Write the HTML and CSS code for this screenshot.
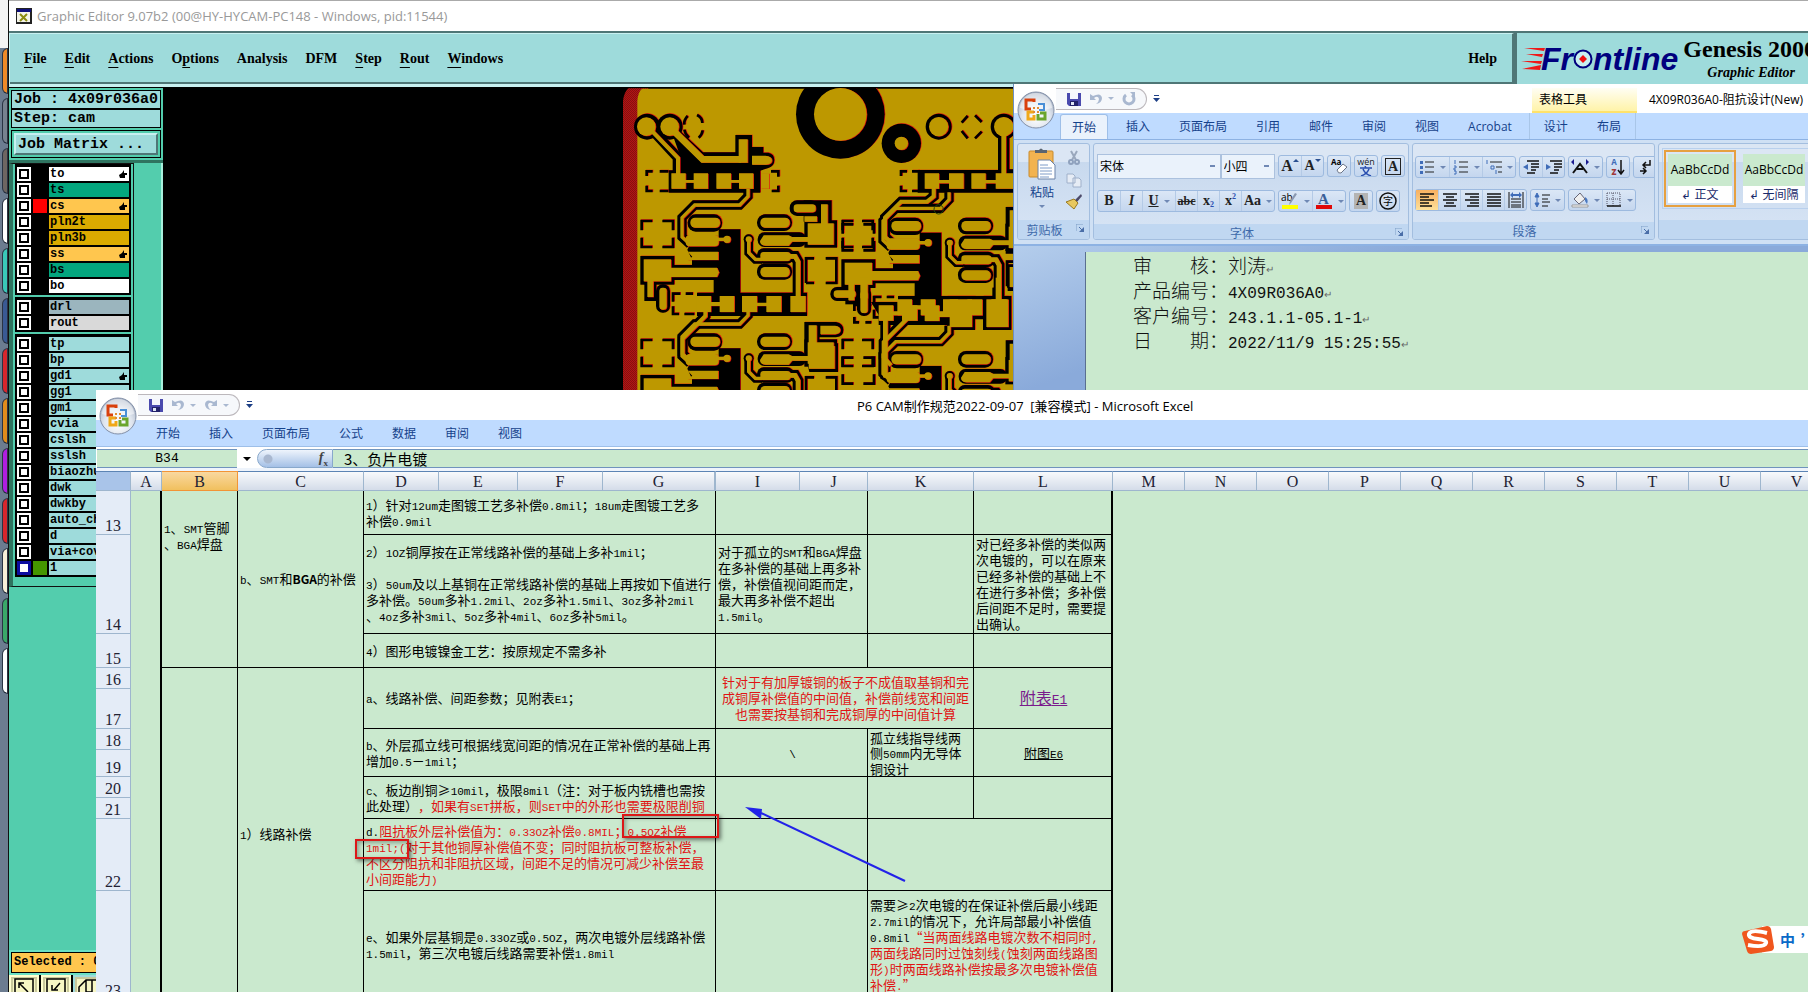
FILE: index.html
```html
<!DOCTYPE html>
<html lang="zh-CN">
<head>
    <meta charset="UTF-8">
    <meta name="viewport" content="width=device-width, initial-scale=1.0">
    <title>Graphic Editor 9.07b2</title>
    <link rel="stylesheet" href="styles.css">
</head>
<body>
<!-- shared icons -->
<svg class="defs" width="0" height="0">
    <defs>
        <radialGradient id="orbFill" cx="50%" cy="70%" r="65%">
            <stop offset="0" stop-color="#ffffff"/>
            <stop offset="0.6" stop-color="#dfe5ee"/>
            <stop offset="1" stop-color="#a9b4c6"/>
        </radialGradient>
        <symbol id="orb" viewBox="0 0 38 38">
            <circle cx="19" cy="19" r="18" fill="url(#orbFill)" stroke="#8390a8"/>
            <path d="M3 17a16 15 0 0 1 32 0q-16 5-32 0z" fill="#fff" opacity="0.5"/>
            <g fill="none" stroke-width="3">
                <path d="M17 11V9H9v9h5" stroke="#d9400c"/>
                <path d="M21 13h6v6h-5" stroke="#4a8fd6" stroke-width="2"/>
                <path d="M17 21h-6v7h6v-4" stroke="#f0a818"/>
                <path d="M21 23v5h7v-6h-5" stroke="#6aa52c"/>
            </g>
            <path d="M16 16h2v2h-2zM20 16h2v2h-2zM16 20h2v2h-2zM20 20h2v2h-2z" fill="#e08a30"/>
        </symbol>
        <symbol id="save" viewBox="0 0 14 14">
            <path d="M0 1h14v13H2l-2-2z" fill="#4a4aae"/>
            <path d="M3 1h8v6H3z" fill="#f4f6fc"/>
            <path d="M3 9h8v5H3z" fill="#22226a"/>
            <path d="M4 10h3v3H4z" fill="#dfe6f4"/>
        </symbol>
        <symbol id="undo" viewBox="0 0 14 14">
            <path d="M1 2v6h6l-2-2q4-3 5 1 0 3-3 5 6-1 6-6-1-6-9-2z" fill="#a9b8d0"/>
        </symbol>
        <symbol id="redo" viewBox="0 0 14 14">
            <path d="M13 2v6H7l2-2q-4-3-5 1 0 3 3 5-6-1-6-6 1-6 9-2z" fill="#a9b8d0"/>
        </symbol>
        <symbol id="repeat" viewBox="0 0 14 14">
            <path d="M4 3a5 5 0 1 0 6 0" fill="none" stroke="#a9b8d0" stroke-width="3"/>
            <path d="M8 0h5v5z" fill="#a9b8d0"/>
        </symbol>
        <symbol id="more" viewBox="0 0 7 8">
            <path d="M1 0h5v1H1zM0 3h7L3.500 7z" fill="#1d3f86"/>
        </symbol>
        <symbol id="launch" viewBox="0 0 8 8">
            <path d="M0 7V0h7" fill="none" stroke="#7f9fc8"/>
            <path d="M8 3v5H3z" fill="#4a6ea8"/>
            <path d="M3 3l3 3" stroke="#4a6ea8"/>
        </symbol>
        <symbol id="hand" viewBox="0 0 8 9">
            <path d="M0 5l3-2 2-3v3h3v2H6v3H1z" fill="#000"/>
        </symbol>
    </defs>
</svg>

<aside class="dock">
    <i class="tile tile-orange"></i><i class="tile"></i><i class="tile tile-brown"></i><i class="tile tile-white"></i>
    <i class="tile tile-teal"></i><i class="tile tile-navy"></i><i class="tile tile-red"></i><i class="tile tile-amber"></i>
    <i class="tile tile-purple"></i><i class="tile tile-red"></i><i class="tile tile-yellow"></i><i class="tile tile-green"></i>
    <i class="tile tile-white"></i>
</aside>

<!-- Genesis graphic editor -->
<section class="window genesis">
    <header class="gen-title">
        <svg width="16" height="16" viewBox="0 0 16 16">
            <path d="M0 0h16v16H0z" fill="#222"/><path d="M1 1h14v3H1z" fill="#10107a"/><path d="M1 4h13v10H1z" fill="#f4f4e8"/>
            <path d="M4 6l7 7M11 6l-7 7" stroke="#8c8c10" stroke-width="2"/>
        </svg>
        <span>Graphic Editor 9.07b2 (00@HY-HYCAM-PC148 - Windows, pid:11544)</span>
    </header>
    <div class="gen-head">
        <nav class="gen-menu">
            <button><u>F</u>ile</button>
            <button><u>E</u>dit</button>
            <button><u>A</u>ctions</button>
            <button>O<u>p</u>tions</button>
            <button>Analysis</button>
            <button>DFM</button>
            <button><u>S</u>tep</button>
            <button><u>R</u>out</button>
            <button><u>W</u>indows</button>
            <button class="help">Help</button>
        </nav>
        <div class="brand">
            <svg class="speed" width="24" height="24" viewBox="0 0 24 24">
                <path d="M3 1h21l-1 3zM5 7h17l-1 3zM0 14h21l-1 3zM1 22l19-4-1 5z" fill="#f01818"/>
            </svg>
            <span class="frontline">Fr<svg width="20" height="20" viewBox="0 0 20 20"><circle cx="10" cy="10" r="8.500" fill="#c8f0f0" stroke="#00007e" stroke-width="2"/><path d="M10 6l4 4-4 4-4-4z" fill="#f01010"/></svg>ntline</span>
            <div class="product">
                <b>Genesis 2000</b>
                <i>Graphic Editor</i>
            </div>
        </div>
    </div>
    <div class="gen-body">
        <div class="gen-side">
            <div class="job">
                <div class="field">Job : 4x09r036a0</div>
                <div class="field">Step: cam</div>
                <div class="matrix"><button>Job Matrix ...</button></div>
            </div>
            <div class="layers">
                <div class="layer-frame">
                    <ul class="group">
                        <li><input type="checkbox" id="l1"><i></i><label for="l1" class="white">to<svg width="8" height="9"><use href="#hand"/></svg></label></li>
                        <li><input type="checkbox" id="l2"><i></i><label for="l2" class="green">ts</label></li>
                        <li><input type="checkbox" id="l3"><i class="on-red"></i><label for="l3" class="orange">cs<svg width="8" height="9"><use href="#hand"/></svg></label></li>
                        <li><input type="checkbox" id="l4"><i></i><label for="l4" class="gold">pln2t</label></li>
                        <li><input type="checkbox" id="l5"><i></i><label for="l5" class="gold">pln3b</label></li>
                        <li><input type="checkbox" id="l6"><i></i><label for="l6" class="orange">ss<svg width="8" height="9"><use href="#hand"/></svg></label></li>
                        <li><input type="checkbox" id="l7"><i></i><label for="l7" class="green">bs</label></li>
                        <li><input type="checkbox" id="l8"><i></i><label for="l8" class="white">bo</label></li>
                    </ul>
                    <ul class="group">
                        <li><input type="checkbox" id="l9"><i></i><label for="l9" class="steel">drl</label></li>
                        <li><input type="checkbox" id="l10"><i></i><label for="l10" class="silver">rout</label></li>
                    </ul>
                    <ul class="group">
                        <li><input type="checkbox" id="l11"><i></i><label for="l11">tp</label></li>
                        <li><input type="checkbox" id="l12"><i></i><label for="l12">bp</label></li>
                        <li><input type="checkbox" id="l13"><i></i><label for="l13">gd1<svg width="8" height="9"><use href="#hand"/></svg></label></li>
                        <li><input type="checkbox" id="l14"><i></i><label for="l14">gg1</label></li>
                        <li><input type="checkbox" id="l15"><i></i><label for="l15">gm1</label></li>
                        <li><input type="checkbox" id="l16"><i></i><label for="l16">cvia</label></li>
                        <li><input type="checkbox" id="l17"><i></i><label for="l17">cslsh</label></li>
                        <li><input type="checkbox" id="l18"><i></i><label for="l18">sslsh</label></li>
                        <li><input type="checkbox" id="l19"><i></i><label for="l19">biaozhu</label></li>
                        <li><input type="checkbox" id="l20"><i></i><label for="l20">dwk</label></li>
                        <li><input type="checkbox" id="l21"><i></i><label for="l21">dwkby</label></li>
                        <li><input type="checkbox" id="l22"><i></i><label for="l22">auto_ch</label></li>
                        <li><input type="checkbox" id="l23"><i></i><label for="l23">d</label></li>
                        <li><input type="checkbox" id="l24"><i></i><label for="l24">via+cov</label></li>
                        <li><input type="checkbox" id="l25" class="work"><i class="on-green"></i><label for="l25">1</label></li>
                    </ul>
                </div>
                <div class="layer-scroll"></div>
            </div>
            <div class="selected">Selected : 0</div>
            <div class="tools">
                <button aria-label="Select"><svg width="20" height="20" viewBox="0 0 20 20"><path d="M1 20V1h18v19M5 5l9 9M5 10V5h5" fill="none" stroke="#000" stroke-width="1.500"/></svg></button>
                <button aria-label="Pick"><svg width="20" height="20" viewBox="0 0 20 20"><path d="M1 20V1h18v19M14 5l-6 7M6 7v5h6" fill="none" stroke="#000" stroke-width="1.500"/></svg></button>
                <button class="active" aria-label="Polygon"><svg width="20" height="20" viewBox="0 0 20 20"><path d="M1 20V9l7-7h11v18M8 2v12h6V2" fill="none" stroke="#000" stroke-width="1.500"/></svg></button>
            </div>
        </div>
        <div class="canvas">
            <svg class="pcb" width="390" height="303" viewBox="68 81 1170 909">
                <defs>
                    <pattern id="hatch" width="6" height="6" patternUnits="userSpaceOnUse">
                        <path d="M0 0h3v3H0zM3 3h3v3H3z" fill="#e01c1c"/>
                    </pattern>
                    <!-- copper clearances of one amplifier cell -->
                    <g id="cellBlack" fill="currentColor" stroke="currentColor" stroke-width="0" stroke-linecap="butt">
                        <path d="M355 505h65v190h200v70H290v-70h50v-38H215v-9h60v-52l-14-30 10-20 84-8z"/>
                        <rect x="262" y="460" width="103" height="52" rx="24"/>
                        <rect x="470" y="460" width="105" height="50" rx="24"/>
                        <rect x="472" y="514" width="145" height="44" rx="20"/>
                        <rect x="470" y="562" width="110" height="46" rx="20"/>
                        <rect x="470" y="608" width="105" height="48" rx="22"/>
                        <rect x="207" y="612" width="150" height="44"/>
                        <rect x="612" y="478" width="98" height="82"/>
                        <rect x="120" y="585" width="102" height="86"/>
                        <path fill="none" stroke-width="28" d="M443 384v22l-25 26H283l-38 38v58l24 22"/>
                        <path fill="none" stroke-width="26" d="M445 535v40l20 20h20"/>
                        <circle cx="445" cy="535" r="15"/>
                        <path fill="none" stroke-width="32" d="M560 586h24l9 16v96"/>
                        <path fill="none" stroke-width="30" d="M315 755v10l-68 68v46l22 24"/>
                        <path fill="none" stroke-width="36" d="M150 660v60"/>
                        <rect x="167" y="670" width="42" height="85" rx="20"/>
                        <path fill="none" stroke-width="8" d="M124 508v-28h32M186 480h32v28M218 530v28h-32M156 558h-32v-28"/>
                        <path fill="none" stroke-width="8" d="M727 508v-28h32M785 480h32v28M817 530v28h-32M759 558h-32v-28"/>
                        <path fill="none" stroke-width="8" d="M617 666v-74h24M676 592h32v74h-32M641 666h-24"/>
                        <path fill="none" stroke-width="8" d="M218 722v-24h22M256 698h22M218 736v23h18M252 759h30"/>
                    </g>
                    <g id="cellGold" fill="currentColor" stroke="currentColor" stroke-width="0">
                        <rect x="270" y="470" width="89" height="30" rx="14"/>
                        <rect x="256" y="522" width="99" height="34" rx="12"/>
                        <path d="M345 530h30v10h-30z"/><circle cx="380" cy="535" r="11"/>
                        <path d="M262 572h92v25h-92l14-10z"/>
                        <path d="M200 620h150l6 14-6 14H200z"/>
                        <rect x="480" y="470" width="88" height="30" rx="14"/>
                        <path d="M490 523h75l10 5h50v14h-50l-10 12h-70q-16-1-16-14z"/>
                        <rect x="480" y="573" width="90" height="27" rx="10"/>
                        <rect x="480" y="618" width="88" height="30" rx="14"/>
                        <rect x="622" y="487" width="78" height="64"/>
                        <rect x="130" y="595" width="82" height="66"/>
                        <path fill="none" stroke-width="10" d="M443 384v22l-25 26H283l-38 38v58l24 22"/>
                        <path fill="none" stroke-width="10" d="M445 535v40l20 20h20"/>
                        <circle cx="445" cy="535" r="9"/>
                        <path fill="none" stroke-width="14" d="M560 586h24l9 16v106"/>
                        <path fill="none" stroke-width="12" d="M315 745v20l-68 68v46l22 24"/>
                        <path fill="none" stroke-width="18" d="M150 655v53"/>
                        <rect x="177" y="680" width="22" height="66" rx="10"/>
                        <path d="M288 705h44v18h26v-18h44v48h-44v-18h-26v18h-44zM425 705h45v20h28v-20h45v48h-45v-18h-28v18h-45zM570 705h46v48h-46z"/>
                    </g>
                    <g id="topBlack" fill="currentColor" stroke="currentColor" stroke-width="0">
                        <circle cx="720" cy="160" r="133"/><circle cx="903" cy="247" r="59"/>
                        <circle cx="140" cy="197" r="39"/><circle cx="208" cy="197" r="39"/>
                        <path d="M220 230l22-18 66 62h97v-52h50v36h34v17h15q18 4 18 22t-18 24l-34 11H242v-40z"/>
                        <path d="M205 328h275v67H205z"/>
                        <path d="M160 212l72 78v50" fill="none" stroke-width="30"/>
                        <circle cx="1015" cy="197" r="39"/><circle cx="1210" cy="197" r="39"/>
                        <path d="M1193 225h34v100h12v70H952v-68h241z"/>
                        <path fill="none" stroke-width="30" d="M1000 384v22l-20 16h-78l-48 48v58l24 22"/>
                        <path fill="none" stroke-width="8" d="M262 165q-12 12-10 26M290 162q16 8 16 24M252 206q2 14 14 24M307 208q-2 14-12 22"/>
                        <path fill="none" stroke-width="8" d="M1084 185l18-20M1124 163l20 20M1084 210l18 22M1124 232l20-20"/>
                        <path fill="none" stroke-width="8" d="M139 345v-14h18M178 331h26M139 374v16h18M178 390h26M512 331h22v16M534 374v16h-20M902 345v-14h18M935 331h22M902 374v16h18M935 390h22"/>
                        <rect x="568" y="418" width="85" height="47" rx="22"/>
                        <path d="M610 418h84v64h-84z"/>
                    </g>
                    <g id="topGold" fill="currentColor" stroke="currentColor" stroke-width="0">
                        <circle cx="720" cy="160" r="79"/><circle cx="903" cy="247" r="20"/>
                        <circle cx="138" cy="197" r="28"/><circle cx="208" cy="197" r="28"/>
                        <path d="M215 205l92 90h115" fill="none" stroke-width="20"/>
                        <path d="M415 235h27v70h-27zM455 284h40q20 2 20 14t-18 13h-42z"/>
                        <path d="M150 205l83 86v50" fill="none" stroke-width="12"/>
                        <path d="M213 337h43v20h24v-20h43v46h-43v-18h-24v18h-43zM348 337h44v20h24v-20h43v46h-43v-18h-24v18h-44zM482 337h24v46h-24z"/>
                        <circle cx="1015" cy="197" r="29"/><circle cx="1210" cy="197" r="29"/>
                        <path d="M1210 215v130" fill="none" stroke-width="14"/>
                        <path d="M973 337h43v20h30v-20h44v46h-44v-16h-30v16h-43zM1113 337h43v20h30v-20h53v46h-53v-16h-30v16h-43z"/>
                        <path fill="none" stroke-width="12" d="M1000 380v26l-20 16h-78l-48 48v58l24 22"/>
                        <rect x="580" y="430" width="66" height="24" rx="10"/>
                        <path d="M662 430h20v60h-20zM612 466h38v16h-38z"/>
                    </g>
                    <g id="lowBlack" fill="currentColor" stroke="currentColor" stroke-width="0">
                        <path d="M812 723h228v-18h84v102h-84v-15H835v-30z"/>
                        <rect x="1148" y="705" width="85" height="102"/>
                        <rect x="690" y="678" width="88" height="42" rx="20"/>
                        <path d="M765 660h45v65h-30l-30-8z"/>
                        <path fill="none" stroke-width="30" d="M855 780v163l24 10"/>
                        <path fill="none" stroke-width="8" d="M762 750v-18h14M795 732h18M762 768v16h14M795 784h18"/>
                        <path d="M612 783h95q22 4 22 24t-22 22h-50v18h56v86h-86l-15-60z"/>
                        <path d="M1176 680h34v40h-34z"/>
                        <path d="M1216 438h22v140h-22zM1222 610h16v80h-16zM1216 838h22v100h-22z"/>
                    </g>
                    <g id="lowGold" fill="currentColor" stroke="currentColor" stroke-width="0">
                        <path d="M835 733h44v18h26v-18h46v46h-46v-16h-26v16h-44zM973 733h44v18h31v-36h67v83h-67v-30h-31v12h-44z"/>
                        <path d="M1158 715h66v83h-66z"/>
                        <rect x="700" y="688" width="66" height="22" rx="10"/>
                        <path d="M780 650h22v62h-22z"/>
                        <path fill="none" stroke-width="14" d="M855 775v168l30 8"/>
                        <path d="M625 793h24v62h54v68h-78zM660 794h44q16 2 16 13t-16 13h-44z"/>
                        <path d="M1186 650h14v70h-14z"/>
                        <path d="M1228 448h10v70h-10zM1228 618h10v60h-10zM1228 848h10v60h-10z"/>
                    </g>
                </defs>
                <path d="M68 81h1170v909H68z" fill="#000"/>
                <path d="M68 990V120q4-28 16-38h60v908z" fill="#5a0808"/>
                <path d="M68 990V120q4-28 16-38h60v908z" fill="url(#hatch)"/>
                <path d="M111 990V120q2-28 14-37h1113v907z" fill="#bd9800"/>
                <!-- red copies sit just beyond the black ones -->
                <g class="red">
                    <g transform="translate(2 -1)"><use href="#cellBlack"/><use href="#cellBlack" y="357"/><use href="#cellBlack" x="603" y="10"/><use href="#cellBlack" x="603" y="410"/><use href="#topBlack"/><use href="#lowBlack"/></g>
                </g>
                <g class="black"><use href="#cellBlack"/><use href="#cellBlack" y="357"/><use href="#cellBlack" x="603" y="10"/><use href="#cellBlack" x="603" y="410"/><use href="#topBlack"/><use href="#lowBlack"/></g>
                <g class="red"><g transform="translate(2 1)"><use href="#cellGold"/><use href="#cellGold" y="357"/><use href="#cellGold" x="603" y="10"/><use href="#cellGold" x="603" y="410"/><use href="#topGold"/><use href="#lowGold"/></g></g>
                <g class="copper"><use href="#cellGold"/><use href="#cellGold" y="357"/><use href="#cellGold" x="603" y="10"/><use href="#cellGold" x="603" y="410"/><use href="#topGold"/><use href="#lowGold"/></g>
                <circle cx="1015" cy="445" r="14" fill="none" stroke="#22400a" stroke-width="3"/>
            </svg>
        </div>
    </div>
</section>

<!-- Word -->
<section class="window word">
    <header class="titlebar">
        <svg class="orb" width="38" height="38"><use href="#orb"/></svg>
        <div class="qat">
            <button aria-label="保存"><svg width="14" height="14"><use href="#save"/></svg></button>
            <button aria-label="撤消" class="split"><svg width="14" height="14"><use href="#undo"/></svg></button>
            <button aria-label="重复"><svg width="14" height="14"><use href="#repeat"/></svg></button>
        </div>
        <svg class="qat-more" width="7" height="8"><use href="#more"/></svg>
        <div class="context-title">表格工具</div>
        <h1>4X09R036A0-阻抗设计(New)</h1>
    </header>
    <nav class="tabs">
        <button class="current">开始</button><button>插入</button><button>页面布局</button><button>引用</button><button>邮件</button><button>审阅</button><button>视图</button><button>Acrobat</button><span class="context-tabs"><button>设计</button><button>布局</button></span>
    </nav>
    <div class="ribbon">
        <div class="rgroup clipboard">
            <div class="rbody">
                <button class="paste">
                    <svg width="28" height="32" viewBox="0 0 28 32"><rect x="1" y="3" width="24" height="26" rx="1" fill="#f2b350" stroke="#c98a2a"/><path d="M7 5h12V2h-4q-2-3-4 0H7z" fill="#5a6470"/><path d="M10 12h12l5 5v14H10z" fill="#fff" stroke="#6a82a8"/><path d="M12 17h8M12 20h12M12 23h12M12 26h12M12 29h9" stroke="#7f9cc8"/></svg>
                    <span>粘贴</span>
                    <i class="caret"></i>
                </button>
                <div class="stack">
                    <button aria-label="剪切"><svg width="16" height="16" viewBox="0 0 16 16"><path d="M5 1l5 9M11 1L6 10" stroke="#9aa8bd" stroke-width="2"/><circle cx="5" cy="12" r="2" fill="none" stroke="#8fa1bd" stroke-width="2"/><circle cx="11" cy="12" r="2" fill="none" stroke="#8fa1bd" stroke-width="2"/></svg></button>
                    <button aria-label="复制"><svg width="16" height="16" viewBox="0 0 16 16"><path d="M1 2h6l2 2v7H1zM7 6h6l2 2v7H7z" fill="#e6ecf5" stroke="#9fb0ca"/></svg></button>
                    <button aria-label="格式刷"><svg width="16" height="16" viewBox="0 0 16 16"><path d="M15 0l-6 6 2 2 5-6z" fill="#4c4a6a"/><path d="M8 5l4 4-4 6-8-7z" fill="#e8c860" stroke="#9a7a20"/></svg></button>
                </div>
            </div>
            <footer>剪贴板<svg width="8" height="8"><use href="#launch"/></svg></footer>
        </div>
        <div class="rgroup font">
            <div class="rbody">
                <div class="rrow">
                    <select class="combo face" aria-label="字体"><option>宋体</option></select><select class="combo size" aria-label="字号"><option>小四</option></select>
                    <div class="bgroup">
                        <button class="serif big grow">A<svg width="6" height="3" viewBox="0 0 6 3"><path d="M0 3l3-3 3 3z" fill="#2a4f90"/></svg></button>
                        <button class="serif grow">A<svg width="6" height="3" viewBox="0 0 6 3"><path d="M0 0h6L3 3z" fill="#2a4f90"/></svg></button>
                    </div>
                    <div class="bgroup"><button aria-label="清除格式"><svg width="18" height="18" viewBox="0 0 18 18"><text x="1" y="8" font-size="8" font-weight="bold">Aa</text><path d="M7 13l6-6 4 3-6 6q-3 1-4-3z" fill="#fff" stroke="#6a7488"/></svg></button></div>
                    <div class="bgroup"><button aria-label="拼音指南" class="pinyin"><span>wén</span><svg width="12" height="10" viewBox="0 0 12 10"><path d="M5 0l1 2M0 2h12M3 3q2 5 8 7M9 3Q7 8 1 10" fill="none" stroke="#2a4fb0" stroke-width="1.500"/></svg></button></div>
                    <div class="bgroup"><button class="serif boxed"><span>A</span></button></div>
                </div>
                <div class="rrow">
                    <div class="bgroup">
                        <button class="serif"><b>B</b></button><button class="serif"><em>I</em></button><button class="serif split"><u>U</u></button><button class="serif small"><s>abc</s></button><button class="serif">x<sub>2</sub></button><button class="serif">x<sup>2</sup></button><button class="serif split">Aa</button>
                    </div>
                    <div class="bgroup">
                        <button class="split mark" aria-label="突出显示"><svg width="18" height="18" viewBox="0 0 18 18"><text x="0" y="9" font-size="10">ab</text><path d="M16 2l-6 9-2 2 1-4 5-8z" fill="#8a98b0"/><path d="M1 13h16v4H1z" fill="#ffff00"/></svg></button>
                        <button class="split" aria-label="字体颜色"><svg width="18" height="18" viewBox="0 0 18 18"><text x="3" y="12" font-size="15" font-weight="bold" font-family="Liberation Serif" fill="#3a5f98">A</text><path d="M1 13h16v4H1z" fill="#e00808"/></svg></button>
                    </div>
                    <div class="bgroup"><button class="serif shaded"><span>A</span></button></div>
                    <div class="bgroup"><button aria-label="带圈字符"><svg width="18" height="18" viewBox="0 0 18 18"><circle cx="9" cy="9" r="8" fill="none" stroke="#111" stroke-width="1.500"/><text x="4" y="13" font-size="10">字</text></svg></button></div>
                </div>
            </div>
            <footer>字体<svg width="8" height="8"><use href="#launch"/></svg></footer>
        </div>
        <div class="rgroup para">
            <div class="rbody">
                <div class="rrow">
                    <div class="bgroup">
                        <button class="split" aria-label="项目符号"><svg width="16" height="16" viewBox="0 0 16 16"><path d="M1 2h3v3H1zM1 7h3v3H1zM1 12h3v3H1z" fill="#3f6cb8"/><path d="M6 3h9M6 8h9M6 13h9" stroke="#222"/></svg></button>
                        <button class="split" aria-label="编号"><svg width="16" height="16" viewBox="0 0 16 16"><path d="M2 1v4M1 7h2v2H1v2h2M1 12h2v3H1" fill="none" stroke="#3f6cb8"/><path d="M6 3h9M6 8h9M6 13h9" stroke="#222"/></svg></button>
                        <button class="split" aria-label="多级列表"><svg width="16" height="16" viewBox="0 0 16 16"><path d="M1 1v4M5 7h3v3H5zM10 11v4" fill="none" stroke="#3f6cb8"/><path d="M4 3h12M10 8h6M12 13h4" stroke="#222"/></svg></button>
                    </div>
                    <div class="bgroup">
                        <button aria-label="减少缩进"><svg width="18" height="16" viewBox="0 0 18 16"><path d="M5 2h12M9 5h8M9 8h8M9 11h5M5 14h8" stroke="#111" stroke-width="1.500"/><path d="M6 5v6L1 8z" fill="#3f6cb8"/></svg></button>
                        <button aria-label="增加缩进"><svg width="18" height="16" viewBox="0 0 18 16"><path d="M5 2h12M9 5h8M9 8h8M9 11h5M5 14h8" stroke="#111" stroke-width="1.500"/><path d="M1 5v6l5-3z" fill="#3f6cb8"/></svg></button>
                    </div>
                    <div class="bgroup"><button class="split" aria-label="中文版式"><svg width="18" height="16" viewBox="0 0 18 16"><path d="M2 14l7-9 7 9M6 10h6" fill="none" stroke="#111" stroke-width="2"/><path d="M0 3l3-3v6zM18 3l-3-3v6z" fill="#1a1a90"/></svg></button></div>
                    <div class="bgroup"><button aria-label="排序" class="sort"><span>A<br><b>Z</b></span><svg width="8" height="16" viewBox="0 0 8 16"><path d="M4 1v13M1 11l3 4 3-4" fill="none" stroke="#111" stroke-width="1.500"/></svg></button></div>
                    <div class="bgroup"><button aria-label="显示标记"><svg width="16" height="16" viewBox="0 0 16 16"><path d="M13 1v5H7M9 3L6 6l3 3M3 12h5M6 9l3 3-3 3" fill="none" stroke="#111" stroke-width="1.500"/></svg></button></div>
                </div>
                <div class="rrow">
                    <div class="bgroup">
                        <button class="pressed" aria-label="左对齐"><svg width="14" height="14" viewBox="0 0 14 14"><path d="M0 1h14M0 4h9M0 7h14M0 10h9M0 13h12" stroke="#111" stroke-width="1.500"/></svg></button>
                        <button aria-label="居中"><svg width="14" height="14" viewBox="0 0 14 14"><path d="M0 1h14M3 4h8M0 7h14M3 10h8M1 13h12" stroke="#111" stroke-width="1.500"/></svg></button>
                        <button aria-label="右对齐"><svg width="14" height="14" viewBox="0 0 14 14"><path d="M0 1h14M5 4h9M0 7h14M5 10h9M2 13h12" stroke="#111" stroke-width="1.500"/></svg></button>
                        <button aria-label="两端对齐"><svg width="14" height="14" viewBox="0 0 14 14"><path d="M0 1h14M0 4h14M0 7h14M0 10h14M0 13h14" stroke="#111" stroke-width="1.500"/></svg></button>
                        <button aria-label="分散对齐"><svg width="16" height="16" viewBox="0 0 16 16"><path d="M1 0v16M15 0v16M3 7h10M3 10h10M3 13h10M3 15h10" stroke="#111"/><path d="M2 3l3-3v2h6V0l3 3-3 3V4H5v2z" fill="#3f6cb8"/></svg></button>
                    </div>
                    <div class="bgroup"><button class="split" aria-label="行距"><svg width="16" height="16" viewBox="0 0 16 16"><path d="M3 3v10M1 5l2-4 2 4zM1 11l2 4 2-4z" fill="#3f6cb8" stroke="#3f6cb8"/><path d="M8 3h8M8 7h6M8 10h8M8 14h6" stroke="#111"/></svg></button></div>
                    <div class="bgroup">
                        <button class="split" aria-label="底纹"><svg width="18" height="16" viewBox="0 0 18 16"><path d="M3 7l6-6 5 6-6 5z" fill="#f0f0f0" stroke="#667"/><path d="M14 5q4 2 2 7l-2-3z" fill="#4a78c0"/><path d="M1 13h16v2H1z" fill="#fff" stroke="#999"/></svg></button>
                        <button class="split" aria-label="边框"><svg width="16" height="16" viewBox="0 0 16 16"><path d="M1 1h13v13M1 1v13M7 1v13M1 7h13" fill="none" stroke="#556" stroke-dasharray="1 1"/><path d="M1 14h14" stroke="#111" stroke-width="1.500"/></svg></button>
                    </div>
                </div>
            </div>
            <footer>段落<svg width="8" height="8"><use href="#launch"/></svg></footer>
        </div>
        <div class="rgroup styles">
            <div class="gallery">
                <button class="style chosen"><span>AaBbCcDd</span><em>↲ 正文</em></button>
                <button class="style"><span>AaBbCcDd</span><em>↲ 无间隔</em></button>
            </div>
            <footer></footer>
        </div>
    </div>
    <div class="workspace">
        <article class="page">
            <p>审&emsp;&emsp;核：刘涛<small>↵</small></p>
            <p>产品编号：<span>4X09R036A0</span><small>↵</small></p>
            <p>客户编号：<span>243.1.1-05.1-1</span><small>↵</small></p>
            <p>日&emsp;&emsp;期：<span>2022/11/9 15:25:55</span><small>↵</small></p>
        </article>
    </div>
</section>

<!-- Excel -->
<section class="window excel">
    <header class="titlebar">
        <svg class="orb" width="38" height="38"><use href="#orb"/></svg>
        <div class="qat">
            <button aria-label="保存"><svg width="14" height="14"><use href="#save"/></svg></button>
            <button aria-label="撤消" class="split"><svg width="14" height="14"><use href="#undo"/></svg></button>
            <button aria-label="恢复" class="split"><svg width="14" height="14"><use href="#redo"/></svg></button>
        </div>
        <svg class="qat-more" width="7" height="8"><use href="#more"/></svg>
        <h1>P6 CAM制作规范2022-09-07&nbsp; [兼容模式] - Microsoft Excel</h1>
    </header>
    <nav class="tabs">
        <button>开始</button><button>插入</button><button>页面布局</button><button>公式</button><button>数据</button><button>审阅</button><button>视图</button>
    </nav>
    <div class="formula">
        <input class="namebox" value="B34" aria-label="名称框">
        <button class="drop" aria-label="展开"><i class="caret"></i></button>
        <button class="fx"><i>f</i><sub>x</sub></button>
        <input class="content" value="3、负片电镀" aria-label="编辑栏">
    </div>
    <div class="sheet">
        <table>
            <colgroup>
                <col class="c-row"><col class="c-a"><col class="c-b"><col class="c-c"><col class="c-d"><col class="c-e"><col class="c-f"><col class="c-g"><col class="c-i"><col class="c-j"><col class="c-k"><col class="c-l"><col class="c-m"><col class="c-m"><col class="c-m"><col class="c-m"><col class="c-m"><col class="c-m"><col class="c-m"><col class="c-m"><col class="c-m"><col class="c-m">
            </colgroup>
            <thead>
                <tr><th class="corner"></th><th>A</th><th class="picked">B</th><th>C</th><th>D</th><th>E</th><th>F</th><th class="hidden-next">G</th><th>I</th><th>J</th><th>K</th><th>L</th><th>M</th><th>N</th><th>O</th><th>P</th><th>Q</th><th>R</th><th>S</th><th>T</th><th>U</th><th>V</th></tr>
            </thead>
            <tbody>
                <tr class="r13">
                    <th>13</th><td class="blank edge" rowspan="11"></td>
                    <td class="cat" rowspan="3"><span>1</span>、<span>SMT</span>管脚<br>、<span>BGA</span>焊盘</td>
                    <td class="sub" rowspan="3"><span>b</span>、<span>SMT</span>和<b>BGA</b>的补偿</td>
                    <td colspan="4"><span>1</span>）针对<span>12um</span>走图镀工艺多补偿<span>0.8mil</span>；<span>18um</span>走图镀工艺多<br>补偿<span>0.9mil</span></td>
                    <td colspan="2"></td><td></td><td class="last"></td><td class="blank" colspan="10" rowspan="11"></td>
                </tr>
                <tr class="r14">
                    <th>14</th>
                    <td colspan="4"><span>2</span>）<span>1OZ</span>铜厚按在正常线路补偿的基础上多补<span>1mil</span>；<br><br><span>3</span>）<span>50um</span>及以上基铜在正常线路补偿的基础上再按如下值进行<br>多补偿。<span>50um</span>多补<span>1.2mil</span>、<span>2oz</span>多补<span>1.5mil</span>、<span>3oz</span>多补<span>2mil</span><br>、<span>4oz</span>多补<span>3mil</span>、<span>5oz</span>多补<span>4mil</span>、<span>6oz</span>多补<span>5mil</span>。</td>
                    <td colspan="2">对于孤立的<span>SMT</span>和<span>BGA</span>焊盘<br>在多补偿的基础上再多补<br>偿，补偿值视间距而定，<br>最大再多补偿不超出<br><span>1.5mil</span>。</td>
                    <td></td>
                    <td class="last">对已经多补偿的类似两<br>次电镀的，可以在原来<br>已经多补偿的基础上不<br>在进行多补偿；多补偿<br>后间距不足时，需要提<br>出确认。</td>
                </tr>
                <tr class="r15">
                    <th>15</th>
                    <td colspan="4"><span>4</span>）图形电镀镍金工艺：按原规定不需多补</td>
                    <td colspan="2"></td><td></td><td class="last"></td>
                </tr>
                <tr class="r16">
                    <th>16</th>
                    <td rowspan="8"></td><td class="sub" rowspan="8"><span>1</span>）线路补偿</td>
                    <td colspan="4" rowspan="2"><span>a</span>、线路补偿、间距参数；见附表<span>E1</span>；</td>
                    <td class="red mid" colspan="3" rowspan="2">针对于有加厚镀铜的板子不成值取基铜和完<br>成铜厚补偿值的中间值，补偿前线宽和间距<br>也需要按基铜和完成铜厚的中间值计算</td>
                    <td class="last mid" rowspan="2"><a class="visited" href="#e1">附表<span>E1</span></a></td>
                </tr>
                <tr class="r17"><th>17</th></tr>
                <tr class="r18">
                    <th>18</th>
                    <td colspan="4" rowspan="2"><span>b</span>、外层孤立线可根据线宽间距的情况在正常补偿的基础上再<br>增加<span>0.5</span>－<span>1mil</span>；</td>
                    <td class="mid" colspan="2" rowspan="2"><span>\</span></td>
                    <td class="tight" rowspan="2">孤立线指导线两<br>侧<span>50mm</span>内无导体<br>铜设计</td>
                    <td class="last mid" rowspan="2"><a href="#e6">附图<span>E6</span></a></td>
                </tr>
                <tr class="r19"><th>19</th></tr>
                <tr class="r20">
                    <th>20</th>
                    <td colspan="4" rowspan="2"><span>c</span>、板边削铜≥<span>10mil</span>，极限<span>8mil</span>（注：对于板内铣槽也需按<br>此处理）<em class="red">，如果有<span>SET</span>拼板，则<span>SET</span>中的外形也需要极限削铜</em></td>
                    <td colspan="2" rowspan="2"></td><td rowspan="2"></td><td class="last" rowspan="2"></td>
                </tr>
                <tr class="r21"><th>21</th></tr>
                <tr class="r22">
                    <th>22</th>
                    <td class="red" colspan="4"><span class="ink">d.</span>阻抗板外层补偿值为：<span>0.33OZ</span>补偿<span>0.8MIL</span>；<span>0.5OZ</span>补偿<br><span>1mil;(</span>对于其他铜厚补偿值不变；同时阻抗板可整板补偿，<br>不区分阻抗和非阻抗区域，间距不足的情况可减少补偿至最<br>小间距能力<span>)</span></td>
                    <td colspan="2"></td><td class="last" colspan="2"></td>
                </tr>
                <tr class="r23">
                    <th>23</th>
                    <td colspan="4"><span>e</span>、如果外层基铜是<span>0.33OZ</span>或<span>0.5OZ</span>，两次电镀外层线路补偿<br><span>1.5mil</span>，第三次电镀后线路需要补偿<span>1.8mil</span></td>
                    <td colspan="2"></td>
                    <td class="last" colspan="2">需要≥<span>2</span>次电镀的在保证补偿后最小线距<br><span>2.7mil</span>的情况下，允许局部最小补偿值<br><span>0.8mil</span><em class="red">“当两面线路电镀次数不相同时<span>,</span><br>两面线路同时过蚀刻线<span>(</span>蚀刻两面线路图<br>形<span>)</span>时两面线路补偿按最多次电镀补偿值<br>补偿<span>.</span>”</em></td>
                </tr>
            </tbody>
        </table>
        <!-- mark-up drawn over the cells -->
        <i class="callout callout-a"></i>
        <i class="callout callout-b"></i>
        <svg class="arrow" width="164" height="78" viewBox="0 0 164 78">
            <path d="M16 6l144 68" stroke="#2222e8" stroke-width="2"/>
            <path d="M0 0l17 2-1 10z" fill="#2222e8"/>
        </svg>
    </div>
</section>

<div class="ime">
    <svg width="32" height="28" viewBox="0 0 32 28">
        <path d="M3 5l22-5q3 0 4 3l3 18q0 3-3 4L9 28q-3 0-4-3L0 8q0-3 3-3z" fill="#f0561e"/>
        <path d="M25 7q-16-4-18 1-1 4 9 5 9 1 8 4-2 5-18 2" fill="none" stroke="#fff" stroke-width="4"/>
    </svg>
    <button>中</button>
    <b>’</b>
</div>
</body>
</html>
```
FILE: styles.css
```css
* {
    box-sizing: border-box;
}
body {
    margin: 0;
    height: 100vh;
    overflow: hidden;
    position: relative;
    background: #6c7c90;
    font-family: "Open Sans", "Noto Sans CJK SC", sans-serif;
    font-size: 12px;
    text-spacing-trim: space-all;
}
button {
    margin: 0;
    padding: 0;
    border: none;
    background: none;
    font: inherit;
    color: inherit;
}
h1, p, ul {
    margin: 0;
    padding: 0;
}
.defs {
    position: absolute;
}

/* strip of the desktop behind the windows */
.dock {
    width: 8px;
    height: 100%;
    padding-top: 48px;
    background: linear-gradient(#f4f4f4 48px, #6c7c90 48px);
}
.tile {
    display: block;
    height: 46px;
    margin: 0 0 4px 2px;
    border: 1px solid #2a3444;
    border-radius: 6px 0 0 6px;
    background: #77828f;
}
.tile-orange { background: #f08a28; }
.tile-brown { background: #6e6662; }
.tile-white { background: #fff; }
.tile-teal { background: #3ac8b8; }
.tile-navy { background: #3a5a94; }
.tile-red { background: #d8262c; }
.tile-amber { background: #e08c1c; }
.tile-purple { background: #b01ee0; }
.tile-yellow { background: #f8f0d8; }
.tile-green { background: #3aa868; }

.window {
    position: absolute;
    right: 0;
    overflow: hidden;
    display: flex;
    flex-direction: column;
}

/* Genesis */
.genesis {
    left: 8px;
    top: 0;
    bottom: 0;
    background: #000;
    border-left: 1px solid #111;
}
.gen-title {
    flex: none;
    height: 31px;
    border-top: 1px solid #aaa;
    background: #fff;
    color: #999;
    font-size: 13px;
    display: flex;
    align-items: center;
    gap: 5px;
    padding: 0 7px;
}
.gen-head {
    flex: none;
    height: 56px;
    display: flex;
    gap: 3px;
    background: #4f7676;
    border-top: 2px solid #4f7676;
}
.gen-menu {
    flex: 1;
    display: flex;
    align-items: center;
    gap: 18px;
    padding: 0 15px 0 14px;
    background: #9edbdb;
    border: 1px solid #c8f0f0;
    border-right: 2px solid #4f7676;
    border-bottom: 3px solid #c8f0f0;
    box-shadow: inset 0 -2px #4f7676;
    font: bold 14px "Liberation Serif", serif;
    color: #000;
}
.gen-menu u {
    text-underline-offset: 4px;
}
.gen-menu .help {
    margin-left: auto;
}
.brand {
    width: 291px;
    display: flex;
    align-items: center;
    background: #9edbdb;
    padding: 0 0 2px 4px;
    white-space: nowrap;
}
.speed {
    flex: none;
}
.frontline {
    display: flex;
    align-items: center;
    margin-left: -4px;
    font: italic bold 32px/36px "Liberation Sans", sans-serif;
    color: #00007e;
}
.product {
    margin-left: 5px;
    color: #000;
    font-family: "Liberation Serif", serif;
    display: flex;
    flex-direction: column;
}
.product b {
    font-size: 24px;
    line-height: 28px;
}
.product i {
    margin-left: 24px;
    font-size: 14px;
    line-height: 20px;
    font-weight: bold;
}
.gen-body {
    flex: 1;
    min-height: 0;
    display: flex;
    border-top: 1px solid #000;
}
.gen-side {
    width: 154px;
    display: flex;
    flex-direction: column;
    background: #53cdad;
}
.job {
    padding: 2px;
    border-bottom: 3px solid #2f7460;
    font: 15px/17px "Liberation Mono", monospace;
    color: #000;
}
.field {
    height: 19px;
    padding: 0 2px;
    border: 1px solid #000;
    background: #9edbdb;
    white-space: nowrap;
    font-weight: bold;
}
.matrix {
    margin-top: 2px;
    padding: 2px;
    border: 1px solid #000;
}
.matrix button {
    width: 100%;
    height: 22px;
    padding: 0 2px;
    text-align: left;
    background: #9edbdb;
    font-weight: bold;
    border: 2px solid #c8f0f0;
    border-right-color: #4f7676;
    border-bottom-color: #4f7676;
}
.layers {
    flex: 1;
    min-height: 0;
    display: flex;
    align-items: flex-start;
}
.layer-frame {
    width: 125px;
    padding: 0 2px 9px;
    margin-right: 1px;
    border: 1px solid #111;
    border-left: 4px solid #2f7460;
}
.layer-scroll {
    flex: 1;
    align-self: stretch;
    border-right: 2px solid #a8f0dc;
}
.group {
    list-style: none;
    background: #000;
    padding: 2px 2px 1px;
}
.group + .group {
    margin-top: 2px;
}
.group li {
    height: 16px;
    display: flex;
    align-items: center;
    gap: 2px;
}
.group input {
    appearance: none;
    flex: none;
    width: 14px;
    height: 14px;
    margin: 0;
    border: 2px solid #fff;
    background: #fff;
    box-shadow: inset 0 0 0 2px #000;
}
.group .work {
    border: 3px solid #0c0ca0;
    background: #fff;
    box-shadow: none;
}
.group i {
    flex: none;
    width: 14px;
    height: 14px;
}
.on-red { background: #f00; }
.on-green { background: #459600; }
.group label {
    flex: 1;
    height: 14px;
    overflow: hidden;
    padding: 0 2px 0 1px;
    display: flex;
    align-items: center;
    justify-content: space-between;
    background: #9edbdb;
    font: bold 12px/14px "Liberation Mono", monospace;
    color: #000;
}
.group .white { background: #fff; }
.group .green { background: #03a67e; }
.group .orange { background: #ffc64e; }
.group .gold { background: #dbab00; }
.group .steel { background: #9bb5be; }
.group .silver { background: #d9d9d9; }
.selected {
    flex: none;
    height: 21px;
    margin: 0 2px 2px;
    padding: 0 2px;
    border: 1px solid #000;
    outline: 2px solid #6ae0c4;
    background: #ffc64e;
    font: bold 12px/19px "Liberation Mono", monospace;
    color: #000;
}
.tools {
    flex: none;
    height: 17px;
    overflow: hidden;
    background: #000;
    display: flex;
    align-items: flex-start;
    gap: 2px;
}
.tools button {
    height: 26px;
    padding: 1px 3px;
    border: 2px solid #ffffd0;
    background: #f6f6c4;
    box-shadow: inset 0 0 0 2px #c8c89c;
}
.tools .active {
    border-color: #9edbdb;
}
.canvas {
    flex: 1;
    background: #000;
    overflow: hidden;
}
.pcb {
    display: block;
    margin-left: 460px;
}
.red { color: #e01010; }
.black { color: #000; }
.copper { color: #bd9800; }

/* Office windows */
.word {
    left: 1013px;
    top: 84px;
    bottom: 602px;
    background: #bfdbff;
    border-left: 1px solid #6f8fc0;
}
.excel {
    left: 96px;
    top: 390px;
    bottom: 0;
    background: #bfdbff;
}
.titlebar {
    flex: none;
    height: 30px;
    display: flex;
    align-items: center;
    padding-left: 42px;
    background: #fff;
    white-space: nowrap;
}
.titlebar h1 {
    font-size: 12px;
    font-weight: normal;
    color: #000;
}
.orb {
    position: absolute;
    left: 3px;
    top: 7px;
}
.qat {
    height: 22px;
    display: flex;
    align-items: center;
    gap: 8px;
    padding: 0 10px 0 11px;
    border: 1px solid #bcb8bc;
    border-left: none;
    border-radius: 0 11px 11px 0;
    background: #f6f8fb;
}
.qat button {
    display: flex;
    align-items: center;
}
.qat-more {
    margin-left: 6px;
}
.split::after {
    content: "";
    margin-left: 5px;
    border: 3px solid transparent;
    border-top-color: #6f88b4;
    border-bottom: none;
}
.caret {
    border: 3px solid transparent;
    border-top-color: #6f88b4;
    border-bottom: none;
}
.qat .split::after {
    border-top-color: #a9b8d0;
}
.tabs {
    flex: none;
    height: 26px;
    display: flex;
    align-items: stretch;
    gap: 29px;
    padding-left: 60px;
    background: #bfdbff;
    color: #15428b;
    white-space: nowrap;
}
.word .titlebar {
    height: 29px;
}
.word .tabs {
    padding-left: 57px;
}
.context-title {
    align-self: stretch;
    width: 105px;
    margin: 4px 12px 0 372px;
    padding: 2px 7px;
    border-bottom: 2px solid #ffe26a;
    background: linear-gradient(#fffef4, #fff3a8);
    color: #000;
}
.word .tabs .current {
    margin: 1px -11px 0;
    padding: 0 11px;
    border: 1px solid #9ebfe8;
    border-bottom: none;
    border-radius: 3px 3px 0 0;
    background: #eaf2fc;
}
.context-tabs {
    display: flex;
    gap: 29px;
    margin-left: -12px;
    padding: 0 14px;
    border: 1px solid #a9c6e8;
    border-width: 0 1px;
}
.ribbon {
    flex: none;
    height: 107px;
    display: flex;
    gap: 3px;
    padding: 3px 3px 4px;
    border-top: 1px solid #8db2e3;
    border-bottom: 2px solid #8db2e3;
    background: #cfe0f4;
}
.rgroup {
    flex: none;
    display: flex;
    flex-direction: column;
    border: 1px solid #a3bedf;
    border-radius: 3px;
    background: linear-gradient(#dbe6f4 18px, #c8d9ee 18px, #d8e5f5);
    overflow: hidden;
}
.rgroup footer {
    height: 19px;
    margin-top: auto;
    padding-right: 18px;
    display: flex;
    align-items: center;
    justify-content: center;
    background: #c0d7f1;
    color: #3e6aaa;
    position: relative;
}
.rgroup footer svg {
    position: absolute;
    right: 5px;
    top: 4px;
}
.clipboard { width: 73px; }
.font { width: 316px; }
.para { width: 243px; }
.styles { width: 400px; }
.clipboard .rbody {
    display: flex;
    justify-content: space-between;
    padding: 4px 7px 0 10px;
}
.paste {
    display: flex;
    flex-direction: column;
    align-items: center;
    gap: 4px;
    color: #15428b;
    line-height: 17px;
}
.stack {
    display: flex;
    flex-direction: column;
    gap: 6px;
    padding-top: 2px;
}
.stack button {
    height: 16px;
}
.font .rbody {
    padding: 10px 3px 0;
}
.para .rbody {
    padding: 12px 2px 0;
}
.rrow {
    display: flex;
    align-items: center;
    gap: 3px;
    height: 24px;
    margin-bottom: 11px;
    color: #222;
}
.para .rrow {
    height: 22px;
}
.bgroup {
    display: flex;
    height: 22px;
    border: 1px solid #9dbadf;
    border-radius: 3px;
    background: linear-gradient(#dbe7f6, #c4d6ee);
}
.bgroup button {
    display: flex;
    align-items: center;
    justify-content: center;
    min-width: 22px;
}
.bgroup button + button {
    border-left: 1px solid #b4cae6;
}
.bgroup .split {
    min-width: 33px;
}
.serif {
    font: bold 14px "Liberation Serif", serif;
}
.serif.big {
    font-size: 16px;
}
.grow svg {
    align-self: flex-start;
    margin-top: 3px;
}
.serif.small {
    font-size: 12px;
}
.serif sup, .serif sub {
    font-size: 8px;
    line-height: 8px;
    color: #2a4fb0;
}
.serif sup {
    align-self: flex-start;
    margin-top: 2px;
}
.serif sub {
    align-self: flex-end;
    margin-bottom: 2px;
}
.bgroup .pinyin {
    flex-direction: column;
    font-size: 9px;
    line-height: 9px;
}
.sort {
    font-size: 8px;
    font-weight: bold;
    line-height: 10px;
    color: #3f6cb8;
}
.sort b {
    color: #a03838;
}
.boxed span {
    padding: 0 2px;
    border: 1px solid #222;
    line-height: 15px;
}
.shaded span {
    padding: 0 2px;
    background: #b4b4b4;
    line-height: 16px;
}
.pressed {
    background: linear-gradient(#f8b060, #fde09a);
}
.combo {
    height: 25px;
    appearance: none;
    border: 1px solid #abc1de;
    border-radius: 0;
    margin: 0;
    padding: 0 2px;
    background: #eaf2fb linear-gradient(#6f88b4, #6f88b4) no-repeat right 5px center / 5px 2px;
    font: 12px "Open Sans", "Noto Sans CJK SC", sans-serif;
    color: #000;
}
.face {
    width: 125px;
    margin-right: -3px;
}
.size { width: 55px; }
.gallery {
    display: flex;
    gap: 4px;
    margin: 4px 4px 0 3px;
    padding: 1px;
    border: 1px solid #b9d0ed;
}
.style {
    width: 68px;
    height: 57px;
    display: flex;
    flex-direction: column;
    padding: 3px 2px;
    border: 1px solid transparent;
}
.style.chosen {
    width: 72px;
    border: 2px solid #e6a040;
    padding: 2px;
}
.style span {
    height: 32px;
    background: #cae9ce;
    line-height: 32px;
    font-size: 12px;
    color: #000;
}
.style em {
    height: 17px;
    background: #fff;
    line-height: 17px;
    font-style: normal;
    color: #1a2a6a;
}
.workspace {
    flex: 1;
    display: flex;
    padding: 6px 0 0 71px;
    background: linear-gradient(160deg, #b4cdec, #8aaada 140px);
}
.page {
    flex: 1;
    border-left: 1px solid #5a6f90;
    background: #cae9ce;
    padding: 0 0 0 47px;
    font: 19px/25px "Noto Sans CJK SC", sans-serif;
    font-weight: 300;
    color: #111;
}
.page p {
    height: 25px;
}
.page span {
    font: 16px/16px "Liberation Mono", monospace;
}
.page small {
    font-size: 10px;
    line-height: 10px;
    color: #666;
}

/* Excel parts */
.excel .titlebar h1 {
    margin-left: 604px;
    font-size: 13px;
}
.formula {
    flex: none;
    height: 25px;
    display: flex;
    padding: 2px 0 0 1px;
    border-top: 1px solid #9ebfe8;
    border-bottom: 3px solid #eef4fc;
    background: #fff;
}
.formula input {
    border: 1px solid #6f93bd;
    border-width: 1px 0;
    background: #cae9ce;
    margin: 0;
    padding: 0;
    color: #000;
    outline: none;
}
.namebox {
    width: 140px;
    text-align: center;
    font: 13px "Liberation Mono", monospace;
}
.drop {
    width: 20px;
    display: flex;
    align-items: center;
    justify-content: center;
}
.drop .caret {
    border-width: 4px 4px 0;
    border-top-color: #000;
}
.fx {
    width: 76px;
    padding-right: 4px;
    border-radius: 10px 0 0 10px;
    border: 1px solid #88a8cc;
    background: radial-gradient(circle at 10px 9px, #a9b8d0 4px, transparent 5px), linear-gradient(#eef4fc, #a4c0e6);
    text-align: right;
    font: bold 14px/16px "Liberation Serif", serif;
    color: #444;
}
.fx sub {
    font-size: 9px;
    line-height: 9px;
}
.formula .content {
    flex: 1;
    padding-left: 11px;
    font: 15px "Noto Sans CJK SC", sans-serif;
}
.sheet {
    flex: 1;
    min-height: 0;
    position: relative;
    overflow: hidden;
    background: #cae9ce;
}
.sheet table {
    width: 1737px;
    table-layout: fixed;
    border-collapse: separate;
    border-spacing: 0;
    font: 13px/16px "Noto Sans CJK SC", sans-serif;
    color: #000;
}
.c-row { width: 35px; }
.c-a { width: 31px; }
.c-b { width: 76px; }
.c-c { width: 126px; }
.c-d { width: 75px; }
.c-e { width: 79px; }
.c-f { width: 85px; }
.c-g { width: 113px; }
.c-i { width: 84px; }
.c-j { width: 68px; }
.c-k { width: 106px; }
.c-l { width: 139px; }
.c-m { width: 72px; }
.sheet th {
    padding: 0;
    font: 16px/16px "Liberation Serif", serif;
    color: #223;
}
.sheet thead th {
    height: 20px;
    padding-top: 1px;
    border: 1px solid #9eb6ce;
    border-width: 1px 1px 1px 0;
    border-top-color: #5c84b4;
    background: linear-gradient(#f8fafc, #d4dce9);
}
.sheet thead .corner {
    background: #a9c4e9;
}
.sheet thead .picked {
    background: linear-gradient(#f9d8a0, #f1c05e);
    border-color: #f29436;
}
.sheet thead .hidden-next {
    border-right-width: 2px;
}
.sheet tbody th {
    vertical-align: bottom;
    border: 1px solid #9eb6ce;
    border-width: 0 1px 1px 0;
    background: #e4ecf7;
}
.sheet td {
    padding: 0 0 0 2px;
    border: 1px solid #000;
    border-width: 0 1px 1px 0;
    white-space: nowrap;
    overflow: hidden;
}
.sheet td.blank {
    border: none;
}
.sheet td.edge {
    border-right: 2px solid #000;
}
.sheet td.last {
    border-right: 2px solid #000;
}
.sheet td.cat {
    vertical-align: top;
    padding-top: 29px;
}
.sheet td.mid {
    text-align: center;
}
.sheet td.tight {
    line-height: 15px;
}
.sheet td span {
    font: 11px/11px "Liberation Mono", monospace;
}
.sheet td b {
    font-size: 12px;
    line-height: 12px;
}
.sheet td em {
    font-style: normal;
}
.sheet .red {
    color: #e01414;
}
.sheet .ink {
    color: #000;
}
.sheet a {
    color: #000;
}
.sheet .visited {
    font-size: 16px;
    color: #7a1a8c;
}
.sheet .visited span {
    font-size: 13px;
}
.r13 { height: 44px; }
.r14 { height: 99px; }
.r15 { height: 34px; }
.r16, .r18, .r20, .r21 { height: 21px; }
.r17 { height: 40px; }
.r19 { height: 27px; }
.r22 { height: 72px; }
.r23 { height: 109px; }
.callout {
    position: absolute;
    border: 2px solid #dc1818;
    box-shadow: 2px 2px 4px rgba(0, 0, 0, 0.5), inset 2px 2px 4px rgba(0, 0, 0, 0.3);
}
.callout-a {
    left: 526px;
    top: 343px;
    width: 97px;
    height: 24px;
}
.callout-b {
    left: 259px;
    top: 368px;
    width: 54px;
    height: 20px;
}
.arrow {
    position: absolute;
    left: 649px;
    top: 336px;
}

/* input method bar */
.ime {
    position: absolute;
    right: 0;
    bottom: 39px;
    width: 66px;
    height: 27px;
    display: flex;
    align-items: center;
    gap: 6px;
    background: linear-gradient(90deg, transparent 20px, #fff 20px);
    color: #0a6ac8;
    font: bold 15px "Noto Sans CJK SC", sans-serif;
}
.ime svg {
    flex: none;
}
```
